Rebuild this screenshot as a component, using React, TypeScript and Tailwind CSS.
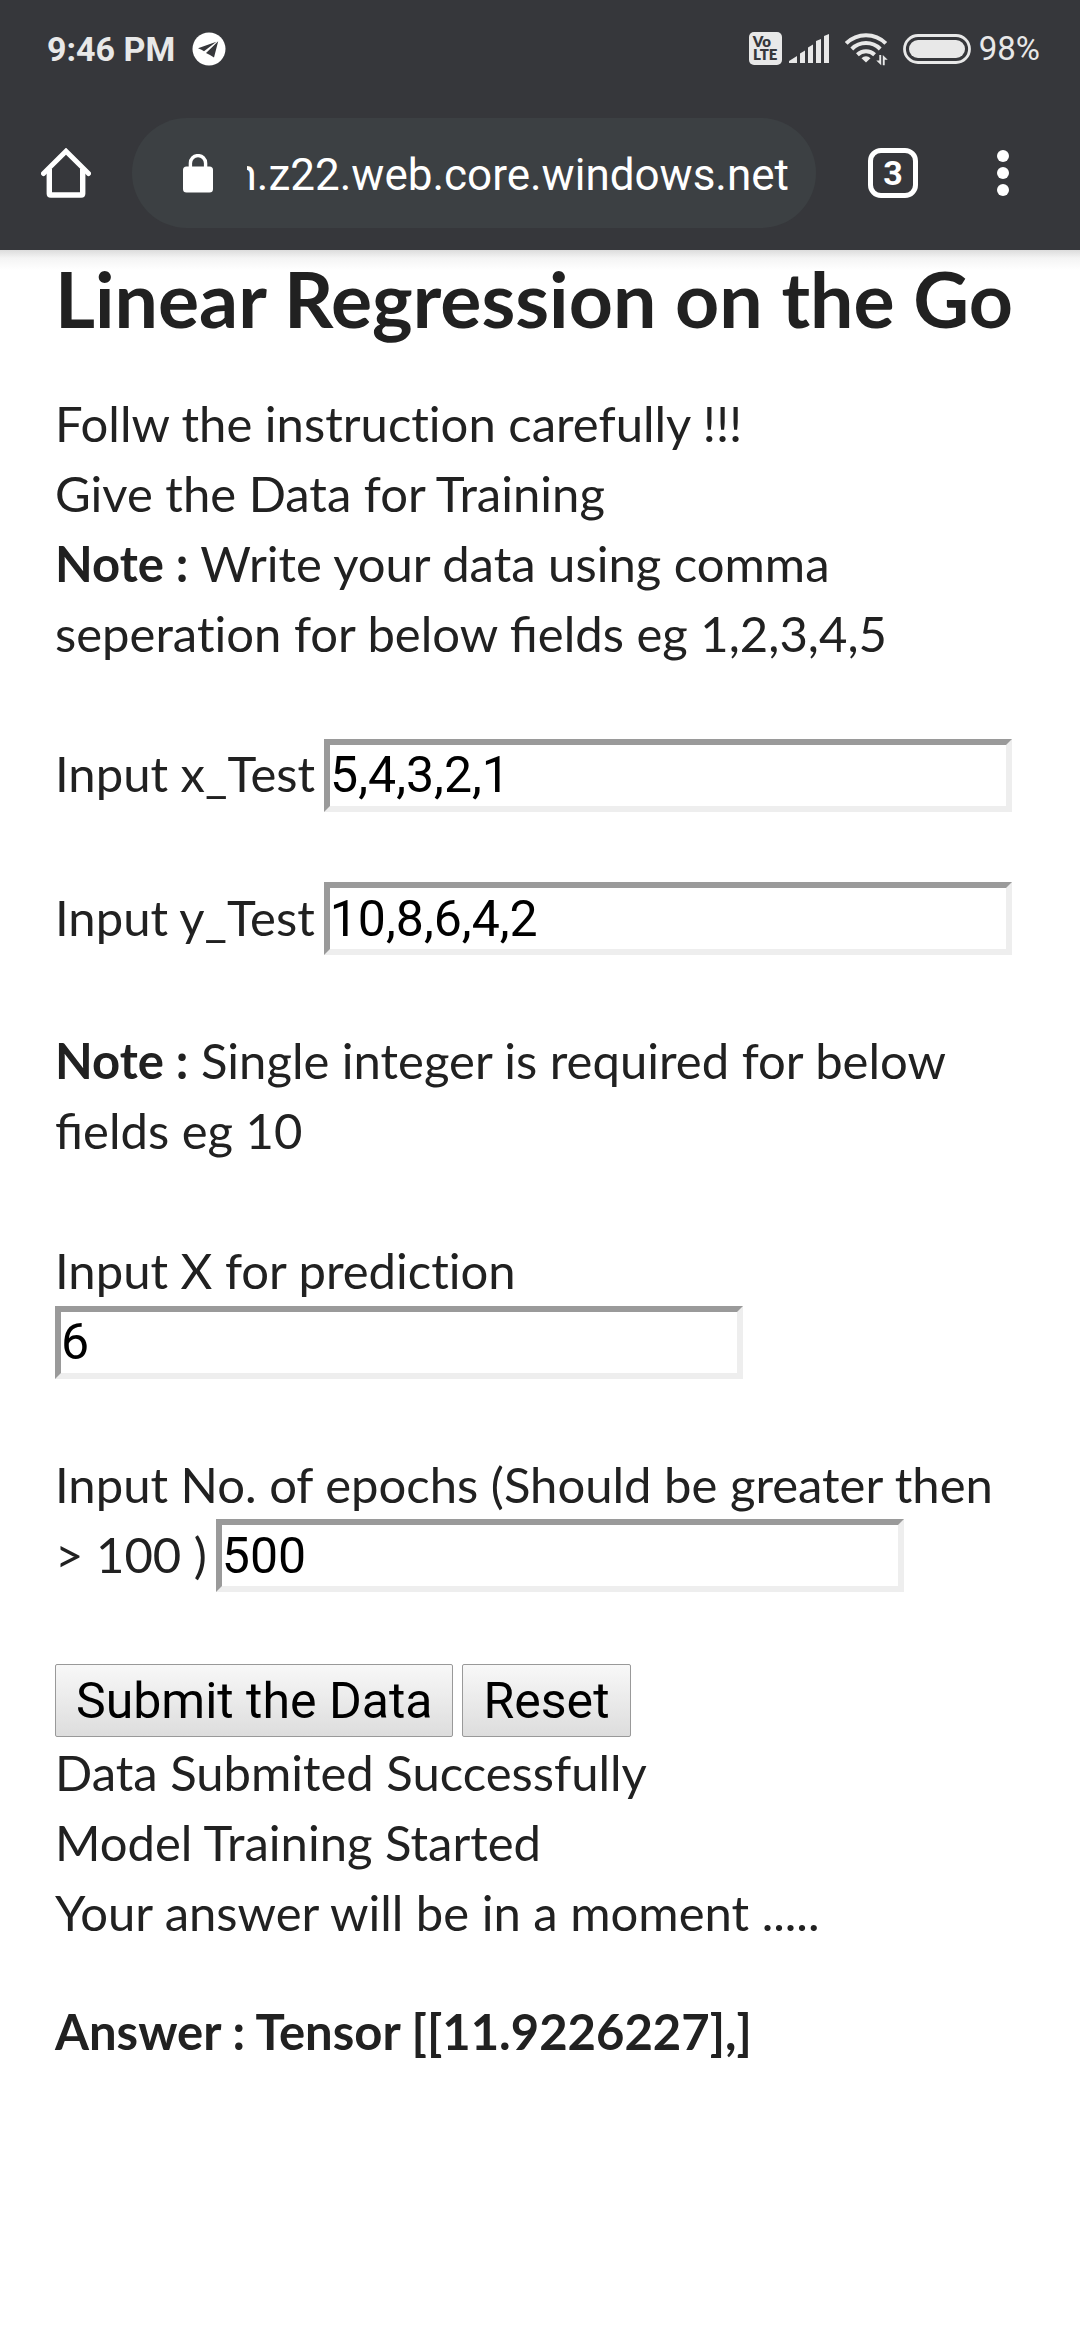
import { useId, useState } from "react";
import type { ReactNode } from "react";

function TelegramIcon() {
  return (
    <svg className="size-[34px]" viewBox="0 0 34 34" aria-hidden="true">
      <circle cx="17" cy="17" r="16.5" fill="#fff" />
      <path d="M6 16.2 24.4 9.8 12 19.2Q10 17.6 6 16.2Z" fill="#36373b" />
      <path d="M26.2 9.2 22 25.6Q18 22.6 14 20.9Z" fill="#36373b" />
    </svg>
  );
}

function SignalIcon() {
  return (
    <svg className="h-[30px] w-[40px]" viewBox="0 0 40 30" fill="#e8e8e8" aria-hidden="true">
      <path d="M0 29V27L8 22V29ZM11 29V19.5L16 16.5V29ZM19 29V13.5L24 10.5V29ZM27 29V7L32 5V29ZM35 29V2L40 0V29Z" />
    </svg>
  );
}

function WifiIcon() {
  return (
    <svg className="h-[34px] w-[43px]" viewBox="0 0 43 34" fill="none" aria-hidden="true">
      <g stroke="#e8e8e8" strokeWidth="4">
        <path d="M1.2 11.4A28 28 0 0 1 40.8 11.4" />
        <path d="M6.8 17A20 20 0 0 1 35.2 17" />
        <path d="M12.4 22.8A12.4 12.4 0 0 1 29.6 22.8" />
      </g>
      <path d="M16.5 26.2A6.4 6.4 0 0 1 25.5 26.2L21 30.6Z" fill="#e8e8e8" />
      <path d="M34.3 23v5.5h-3l4.9 4.7V23ZM37.8 33.2V23l4.9 4.7h-3v5.5Z" fill="#e8e8e8" />
    </svg>
  );
}

function BatteryIcon() {
  return (
    <svg className="h-[30px] w-[68px]" viewBox="0 0 68 30" aria-hidden="true">
      <rect x="1.5" y="1.5" width="65" height="27" rx="13.5" fill="none" stroke="#e8e8e8" strokeWidth="2.8" />
      <rect x="6" y="6" width="56" height="18" rx="9" fill="#e8e8e8" />
    </svg>
  );
}

function HomeIcon() {
  return (
    <svg className="h-[50px] w-[50px]" viewBox="0 0 50 50" fill="none" stroke="#fff" aria-hidden="true">
      <path d="M2.5 25.5 25 3.2 47.5 25.5" strokeWidth="5" strokeLinecap="round" strokeLinejoin="miter" />
      <path d="M8.3 21V45.5Q8.3 47 9.8 47H40.2Q41.7 47 41.7 45.5V21" strokeWidth="5.4" />
    </svg>
  );
}

function LockIcon() {
  return (
    <svg className="h-[39px] w-[30px]" viewBox="0 0 30 39" aria-hidden="true">
      <rect x="0" y="12.5" width="30" height="26" rx="3.5" fill="#fff" />
      <path d="M7.4 14V9.2a7.6 7.6 0 0 1 15.2 0V14" fill="none" stroke="#fff" strokeWidth="3.4" />
    </svg>
  );
}

function StatusBar() {
  return (
    <div className="flex h-[97px] items-center pr-10 pl-[47px] text-[#e8e8e8]">
      <span className="pt-[2px] text-[34px] font-bold">9:46 PM</span>
      <span className="ml-[17px]">
        <TelegramIcon />
      </span>
      <div className="ml-auto flex items-center">
        <span className="mr-[7px] flex size-[33px] flex-col items-center justify-center rounded-[5px] bg-[#e8e8e8] pb-px font-[Lato] text-[15px] leading-[13px] font-extrabold text-[#36373b]">
          <span className="self-start pl-1">Vo</span>
          <span>LTE</span>
        </span>
        <SignalIcon />
        <span className="ml-4">
          <WifiIcon />
        </span>
        <span className="ml-[15px]">
          <BatteryIcon />
        </span>
        <span className="ml-2 text-[33px]">98%</span>
      </div>
    </div>
  );
}

function AddressBar() {
  return (
    <div className="flex h-[153px] items-center pb-px">
      <button type="button" aria-label="Home" className="ml-[41px] shrink-0">
        <HomeIcon />
      </button>
      <button
        type="button"
        className="ml-[41px] flex h-[110px] min-w-0 flex-1 items-center rounded-full bg-[#3c4043] pr-[27px] pl-[51px] text-white"
      >
        <LockIcon />
        <span className="ml-[34px] flex min-w-0 flex-1 justify-end overflow-hidden pt-1 text-[44px] whitespace-nowrap">
          n.z22.web.core.windows.net
        </span>
      </button>
      <button
        type="button"
        aria-label="Open tabs"
        className="ml-[52px] flex size-[50px] shrink-0 items-center justify-center rounded-[13px] border-[5px] border-white text-[34px] font-bold text-white"
      >
        3
      </button>
      <button type="button" aria-label="Menu" className="mr-[71px] ml-[79px] flex shrink-0 flex-col gap-[5px]">
        <span className="size-3 rounded-full bg-white" />
        <span className="size-3 rounded-full bg-white" />
        <span className="size-3 rounded-full bg-white" />
      </button>
    </div>
  );
}

function Field({ label, initial }: { label: string; initial: string }) {
  const id = useId();
  const [value, setValue] = useState(initial);
  return (
    <div className="mb-[70px]">
      <label htmlFor={id} className="mr-[9px]">
        {label}
      </label>
      <input
        id={id}
        type="text"
        value={value}
        onChange={(event) => setValue(event.target.value)}
        className="h-[73px] w-[688px] max-w-full border-[6px] border-t-[#9a9a9a] border-r-[#eeeeee] border-b-[#eeeeee] border-l-[#9a9a9a] bg-white align-baseline font-[Roboto,sans-serif] text-[50px] leading-[58px] text-black"
      />
    </div>
  );
}

function FormButton({ children }: { children: ReactNode }) {
  return (
    <button
      type="button"
      className="h-[73px] rounded-[2px] border border-[#999999] bg-linear-to-b from-[#f8f8f8] to-[#dddddd] px-5 font-[Roboto,sans-serif] text-[50px] leading-[58px] text-black"
    >
      {children}
    </button>
  );
}

export default function App() {
  return (
    <div className="min-h-screen bg-white">
      <header className="bg-[#36373b] font-[Roboto,sans-serif]">
        <StatusBar />
        <AddressBar />
      </header>
      <div className="h-5 bg-linear-to-b from-[#dcdcdc] via-[#f4f4f4] via-40% to-white" />
      <main className="px-[55px] font-[Lato,sans-serif] text-[49px] leading-[70px] text-[#212121] [font-variant-ligatures:none]">
        <h1 className="mt-[-20px] text-[77px] leading-[96px] font-bold">Linear Regression on the Go</h1>
        <form className="mt-[42px]">
          <p>Follw the instruction carefully !!!</p>
          <p>Give the Data for Training</p>
          <p className="mb-[70px]">
            <b>Note :</b> Write your data using comma seperation for below{" "}
            <span className="[font-variant-ligatures:normal]">fields</span> eg 1,2,3,4,5
          </p>
          <Field label="Input x_Test" initial="5,4,3,2,1" />
          <Field label="Input y_Test" initial="10,8,6,4,2" />
          <p className="mb-[70px]">
            <b>Note :</b> Single integer is required for below{" "}
            <span className="[font-variant-ligatures:normal]">fields</span> eg 10
          </p>
          <Field label="Input X for prediction" initial="6" />
          <Field label="Input No. of epochs (Should be greater then > 100 )" initial="500" />
          <div className="flex flex-wrap gap-[9px] pt-[2px]">
            <FormButton>Submit the Data</FormButton>
            <FormButton>Reset</FormButton>
          </div>
        </form>
        <p>Data Submited Successfully</p>
        <p>Model Training Started</p>
        <p>Your answer will be in a moment .....</p>
        <p className="mt-[49px] font-bold">Answer : Tensor [[11.9226227],]</p>
      </main>
    </div>
  );
}
